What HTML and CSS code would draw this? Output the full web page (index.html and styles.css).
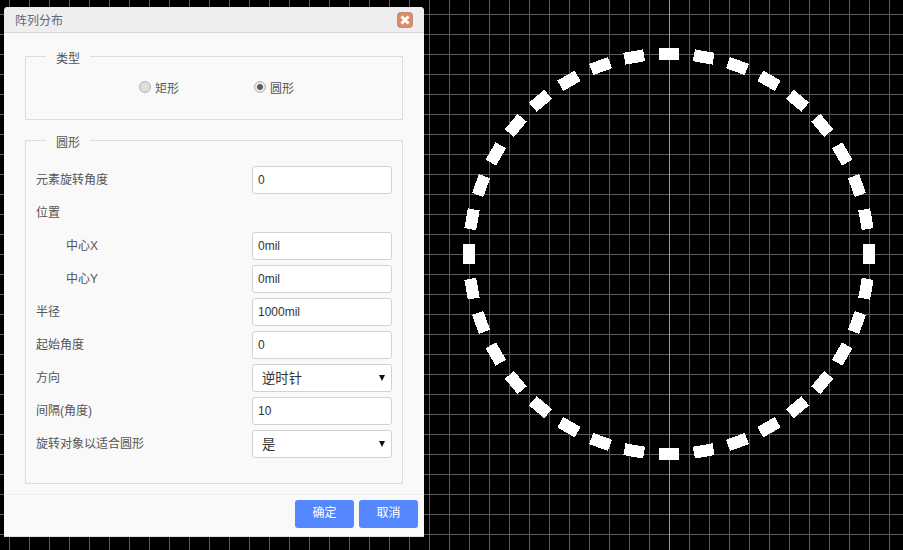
FILE: index.html
```html
<!DOCTYPE html>
<html lang="zh">
<head>
    <meta charset="UTF-8">
    <title>阵列分布</title>
    <link rel="stylesheet" href="styles.css">
</head>
<body>
    <svg class="lienzo" width="903" height="550">
        <defs>
            <rect id="elem" x="659" y="48" width="20" height="12" fill="#fff"/>
        </defs>
        <rect x="669" y="0" width="1" height="550" fill="#999"/>
        <g shape-rendering="crispEdges">
            <use href="#elem"/>
            <use href="#elem" transform="rotate(10 669 254)"/>
            <use href="#elem" transform="rotate(20 669 254)"/>
            <use href="#elem" transform="rotate(30 669 254)"/>
            <use href="#elem" transform="rotate(40 669 254)"/>
            <use href="#elem" transform="rotate(50 669 254)"/>
            <use href="#elem" transform="rotate(60 669 254)"/>
            <use href="#elem" transform="rotate(70 669 254)"/>
            <use href="#elem" transform="rotate(80 669 254)"/>
            <use href="#elem" transform="rotate(90 669 254)"/>
            <use href="#elem" transform="rotate(100 669 254)"/>
            <use href="#elem" transform="rotate(110 669 254)"/>
            <use href="#elem" transform="rotate(120 669 254)"/>
            <use href="#elem" transform="rotate(130 669 254)"/>
            <use href="#elem" transform="rotate(140 669 254)"/>
            <use href="#elem" transform="rotate(150 669 254)"/>
            <use href="#elem" transform="rotate(160 669 254)"/>
            <use href="#elem" transform="rotate(170 669 254)"/>
            <use href="#elem" transform="rotate(180 669 254)"/>
            <use href="#elem" transform="rotate(190 669 254)"/>
            <use href="#elem" transform="rotate(200 669 254)"/>
            <use href="#elem" transform="rotate(210 669 254)"/>
            <use href="#elem" transform="rotate(220 669 254)"/>
            <use href="#elem" transform="rotate(230 669 254)"/>
            <use href="#elem" transform="rotate(240 669 254)"/>
            <use href="#elem" transform="rotate(250 669 254)"/>
            <use href="#elem" transform="rotate(260 669 254)"/>
            <use href="#elem" transform="rotate(270 669 254)"/>
            <use href="#elem" transform="rotate(280 669 254)"/>
            <use href="#elem" transform="rotate(290 669 254)"/>
            <use href="#elem" transform="rotate(300 669 254)"/>
            <use href="#elem" transform="rotate(310 669 254)"/>
            <use href="#elem" transform="rotate(320 669 254)"/>
            <use href="#elem" transform="rotate(330 669 254)"/>
            <use href="#elem" transform="rotate(340 669 254)"/>
            <use href="#elem" transform="rotate(350 669 254)"/>
        </g>
    </svg>

    <div class="dialogo">
        <div class="cabecera">
            <span class="titulo">阵列分布</span>
            <svg class="cerrar" width="16" height="16" viewBox="0 0 16 16">
                <rect x="0.5" y="0.5" width="15" height="15" rx="3" fill="#dd8a66" stroke="#c09078"/>
                <path d="M4.5 4.5L11.5 11.5M11.5 4.5L4.5 11.5" stroke="#fff" stroke-width="3" fill="none"/>
            </svg>
        </div>

        <div class="cuerpo">
            <fieldset class="grupo grupo-tipo">
                <legend>类型</legend>
                <div class="radios">
                    <label class="radio"><span class="punto"></span>矩形</label>
                    <label class="radio"><span class="punto activo"></span>圆形</label>
                </div>
            </fieldset>

            <fieldset class="grupo grupo-circulo">
                <legend>圆形</legend>
                <div class="fila">
                    <span class="etiqueta">元素旋转角度</span>
                    <input class="campo" type="text" value="0">
                </div>
                <div class="fila">
                    <span class="etiqueta">位置</span>
                </div>
                <div class="fila">
                    <span class="etiqueta sangria">中心X</span>
                    <input class="campo" type="text" value="0mil">
                </div>
                <div class="fila">
                    <span class="etiqueta sangria">中心Y</span>
                    <input class="campo" type="text" value="0mil">
                </div>
                <div class="fila">
                    <span class="etiqueta">半径</span>
                    <input class="campo" type="text" value="1000mil">
                </div>
                <div class="fila">
                    <span class="etiqueta">起始角度</span>
                    <input class="campo" type="text" value="0">
                </div>
                <div class="fila">
                    <span class="etiqueta">方向</span>
                    <div class="selector">
                        <select class="campo lista"><option>逆时针</option><option>顺时针</option></select>
                    </div>
                </div>
                <div class="fila">
                    <span class="etiqueta">间隔(角度)</span>
                    <input class="campo" type="text" value="10">
                </div>
                <div class="fila">
                    <span class="etiqueta">旋转对象以适合圆形</span>
                    <div class="selector">
                        <select class="campo lista"><option>是</option><option>否</option></select>
                    </div>
                </div>
            </fieldset>
        </div>

        <div class="pie">
            <button class="boton">确定</button>
            <button class="boton">取消</button>
        </div>
    </div>
</body>
</html>
```

FILE: styles.css
```css
html, body {
    height: 100%;
}
body {
    margin: 0;
    overflow: hidden;
    font-family: "Liberation Sans", "Noto Sans CJK SC", sans-serif;
    font-size: 12px;
    color: #555;
    background-color: #000;
    background-image:
        linear-gradient(#5a5a5a 1px, transparent 1px),
        linear-gradient(90deg, #5a5a5a 1px, transparent 1px);
    background-size: 20px 20px;
    background-position: 9px 14px;
}
.lienzo {
    position: absolute;
    left: 0;
    top: 0;
}
.dialogo {
    position: absolute;
    left: 4px;
    top: 7px;
    width: 420px;
    height: 530px;
    box-sizing: border-box;
    display: flex;
    flex-direction: column;
    background: #f9f9f9;
    border-bottom: 1px solid #ddd;
    border-radius: 4px 4px 0 0;
}
.cabecera {
    flex: none;
    height: 25px;
    display: flex;
    align-items: center;
    justify-content: space-between;
    padding: 0 11px;
    background: #eee;
    border-bottom: 1px solid #d8d8d8;
    border-radius: 4px 4px 0 0;
}
.titulo {
    color: #667;
}
.cerrar {
    display: block;
}
.cuerpo {
    flex: 1;
    padding: 13px 21px 0;
}
.grupo {
    margin: 0;
    padding: 0 10px;
    border: 1px solid #ddd;
}
.grupo legend {
    margin-left: 10px;
    padding: 6px 10px 0;
    line-height: 14px;
}
.grupo-tipo {
    height: 74px;
    margin-bottom: 10px;
    box-sizing: border-box;
}
.grupo-circulo {
    height: 354px;
    box-sizing: border-box;
}
.radios {
    display: flex;
    gap: 55px;
    padding: 15px 0 0 103px;
}
.radio {
    display: flex;
    align-items: center;
    gap: 4px;
    width: 60px;
    line-height: 16px;
}
.punto {
    width: 12px;
    height: 12px;
    margin-top: -5px;
    box-sizing: border-box;
    border: 1px solid #b4b4b4;
    border-radius: 50%;
    background: #dedede;
}
.punto.activo {
    background: radial-gradient(circle, #5e5e5e 0, #5e5e5e 2.5px, #e8e8e8 3.5px);
}
.fila {
    display: flex;
    align-items: center;
    justify-content: space-between;
    height: 28px;
    margin-bottom: 5px;
}
.fila:first-of-type {
    margin-top: 16px;
}
.etiqueta {
    padding-bottom: 4px;
}
.sangria {
    padding-left: 30px;
}
.campo {
    width: 140px;
    height: 28px;
    box-sizing: border-box;
    margin: 0;
    padding: 0 5px;
    border: 1px solid #d2d2d2;
    border-radius: 3px;
    background: #fff;
    color: #333;
    font: inherit;
    outline: none;
}
.selector {
    position: relative;
    width: 140px;
    height: 28px;
}
.selector::after {
    content: "";
    position: absolute;
    right: 7px;
    top: 11px;
    border-left: 3px solid transparent;
    border-right: 3px solid transparent;
    border-top: 6px solid #111;
    pointer-events: none;
}
.lista {
    display: block;
    appearance: none;
    padding-left: 9px;
    font-size: 13.33px;
}
.pie {
    flex: none;
    display: flex;
    justify-content: flex-end;
    gap: 5px;
    height: 42px;
    box-sizing: border-box;
    padding: 5px 6px 0 0;
    border-top: 1px solid #eee;
}
.boton {
    width: 59px;
    height: 28px;
    padding: 0 0 6px;
    border: 0;
    border-radius: 3px;
    background: #5588ff;
    color: #fff;
    font: inherit;
}
```
